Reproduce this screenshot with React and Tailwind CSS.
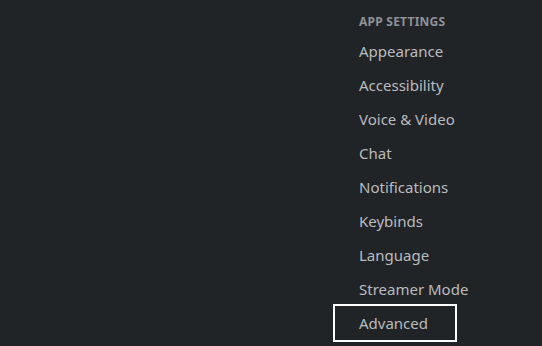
const ITEMS = [
  'Appearance',
  'Accessibility',
  'Voice & Video',
  'Chat',
  'Notifications',
  'Keybinds',
  'Language',
  'Streamer Mode',
  'Advanced',
]

export default function App() {
  return (
    <div className="flex h-[346px] w-full overflow-hidden bg-[#212427] font-['Noto_Sans',sans-serif]">
      <div className="flex-1" />
      <nav className="w-[207px] pt-[14px]">
        <div className="mb-[4px] h-[16px] pl-[24px] text-[12px] font-bold uppercase leading-[16px] tracking-[0.02em] text-[#8e9297]">
          App Settings
        </div>
        <div className="flex w-[120px] flex-col">
          {ITEMS.map((label) => (
            <div
              key={label}
              className={`flex h-[34px] items-center whitespace-nowrap pl-[24px] text-[15px] text-[#b9bbbe] ${
                label === 'Advanced' ? 'outline-2 outline-offset-0 outline-white' : ''
              }`}
            >
              {label}
            </div>
          ))}
        </div>
      </nav>
    </div>
  )
}
